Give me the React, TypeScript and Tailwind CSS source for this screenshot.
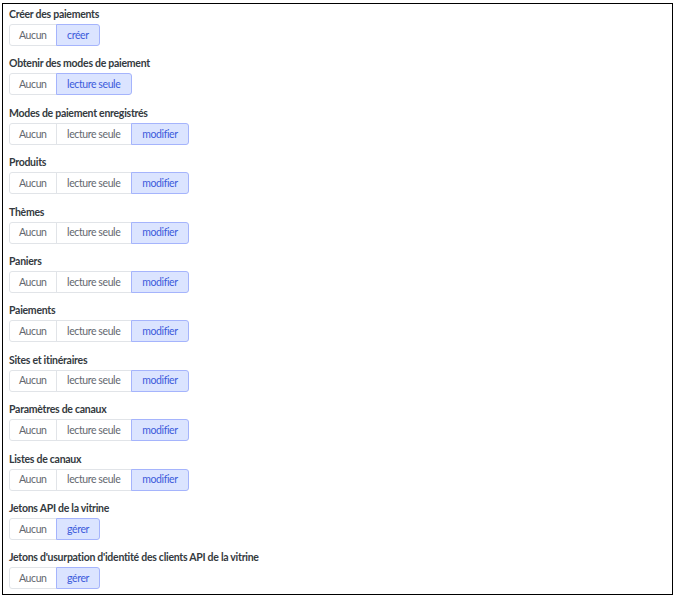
import React from "react";

type Scope = {
  label: string;
  options: string[];
  selected: string;
};

const scopes: Scope[] = [
  { label: "Créer des paiements", options: ["Aucun", "créer"], selected: "créer" },
  { label: "Obtenir des modes de paiement", options: ["Aucun", "lecture seule"], selected: "lecture seule" },
  { label: "Modes de paiement enregistrés", options: ["Aucun", "lecture seule", "modifier"], selected: "modifier" },
  { label: "Produits", options: ["Aucun", "lecture seule", "modifier"], selected: "modifier" },
  { label: "Thèmes", options: ["Aucun", "lecture seule", "modifier"], selected: "modifier" },
  { label: "Paniers", options: ["Aucun", "lecture seule", "modifier"], selected: "modifier" },
  { label: "Paiements", options: ["Aucun", "lecture seule", "modifier"], selected: "modifier" },
  { label: "Sites et itinéraires", options: ["Aucun", "lecture seule", "modifier"], selected: "modifier" },
  { label: "Paramètres de canaux", options: ["Aucun", "lecture seule", "modifier"], selected: "modifier" },
  { label: "Listes de canaux", options: ["Aucun", "lecture seule", "modifier"], selected: "modifier" },
  { label: "Jetons API de la vitrine", options: ["Aucun", "gérer"], selected: "gérer" },
  {
    label: "Jetons d'usurpation d'identité des clients API de la vitrine",
    options: ["Aucun", "gérer"],
    selected: "gérer",
  },
];

function SegmentedControl({ options, selected }: { options: string[]; selected: string }) {
  return (
    <div className="flex">
      {options.map((opt, i) => {
        const active = opt === selected;
        return (
          <button
            key={opt}
            type="button"
            className={[
              "h-[22px] text-[10.5px] tracking-[-0.4px] leading-none border",
              i === 0 ? "rounded-l-[3px] px-[9px]" : "-ml-px px-[10.5px]",
              i === options.length - 1 ? "rounded-r-[3px]" : "",
              active
                ? "relative z-10 bg-[#dbe4ff] border-[#a5b4fc] text-[#3b5bdb]"
                : "bg-white border-[#e1e4e8] text-[#63676e]",
            ].join(" ")}
          >
            {opt}
          </button>
        );
      })}
    </div>
  );
}

export default function App() {
  return (
    <div className="bg-white w-[675px] h-[598px] pt-[3px] pl-[2px]">
      <div
        className="w-[671px] h-[592px] border border-black pl-[6px] pt-[2px] flex flex-col gap-[9.4px]"
        style={{ fontFamily: "Lato, 'Noto Sans', sans-serif" }}
      >
        {scopes.map((s) => (
          <div key={s.label} className="flex flex-col gap-[2px]">
            <div className="h-[16px] leading-[16px] text-[10.5px] tracking-[-0.27px] font-bold text-[#343a40]">
              {s.label}
            </div>
            <SegmentedControl options={s.options} selected={s.selected} />
          </div>
        ))}
      </div>
    </div>
  );
}
